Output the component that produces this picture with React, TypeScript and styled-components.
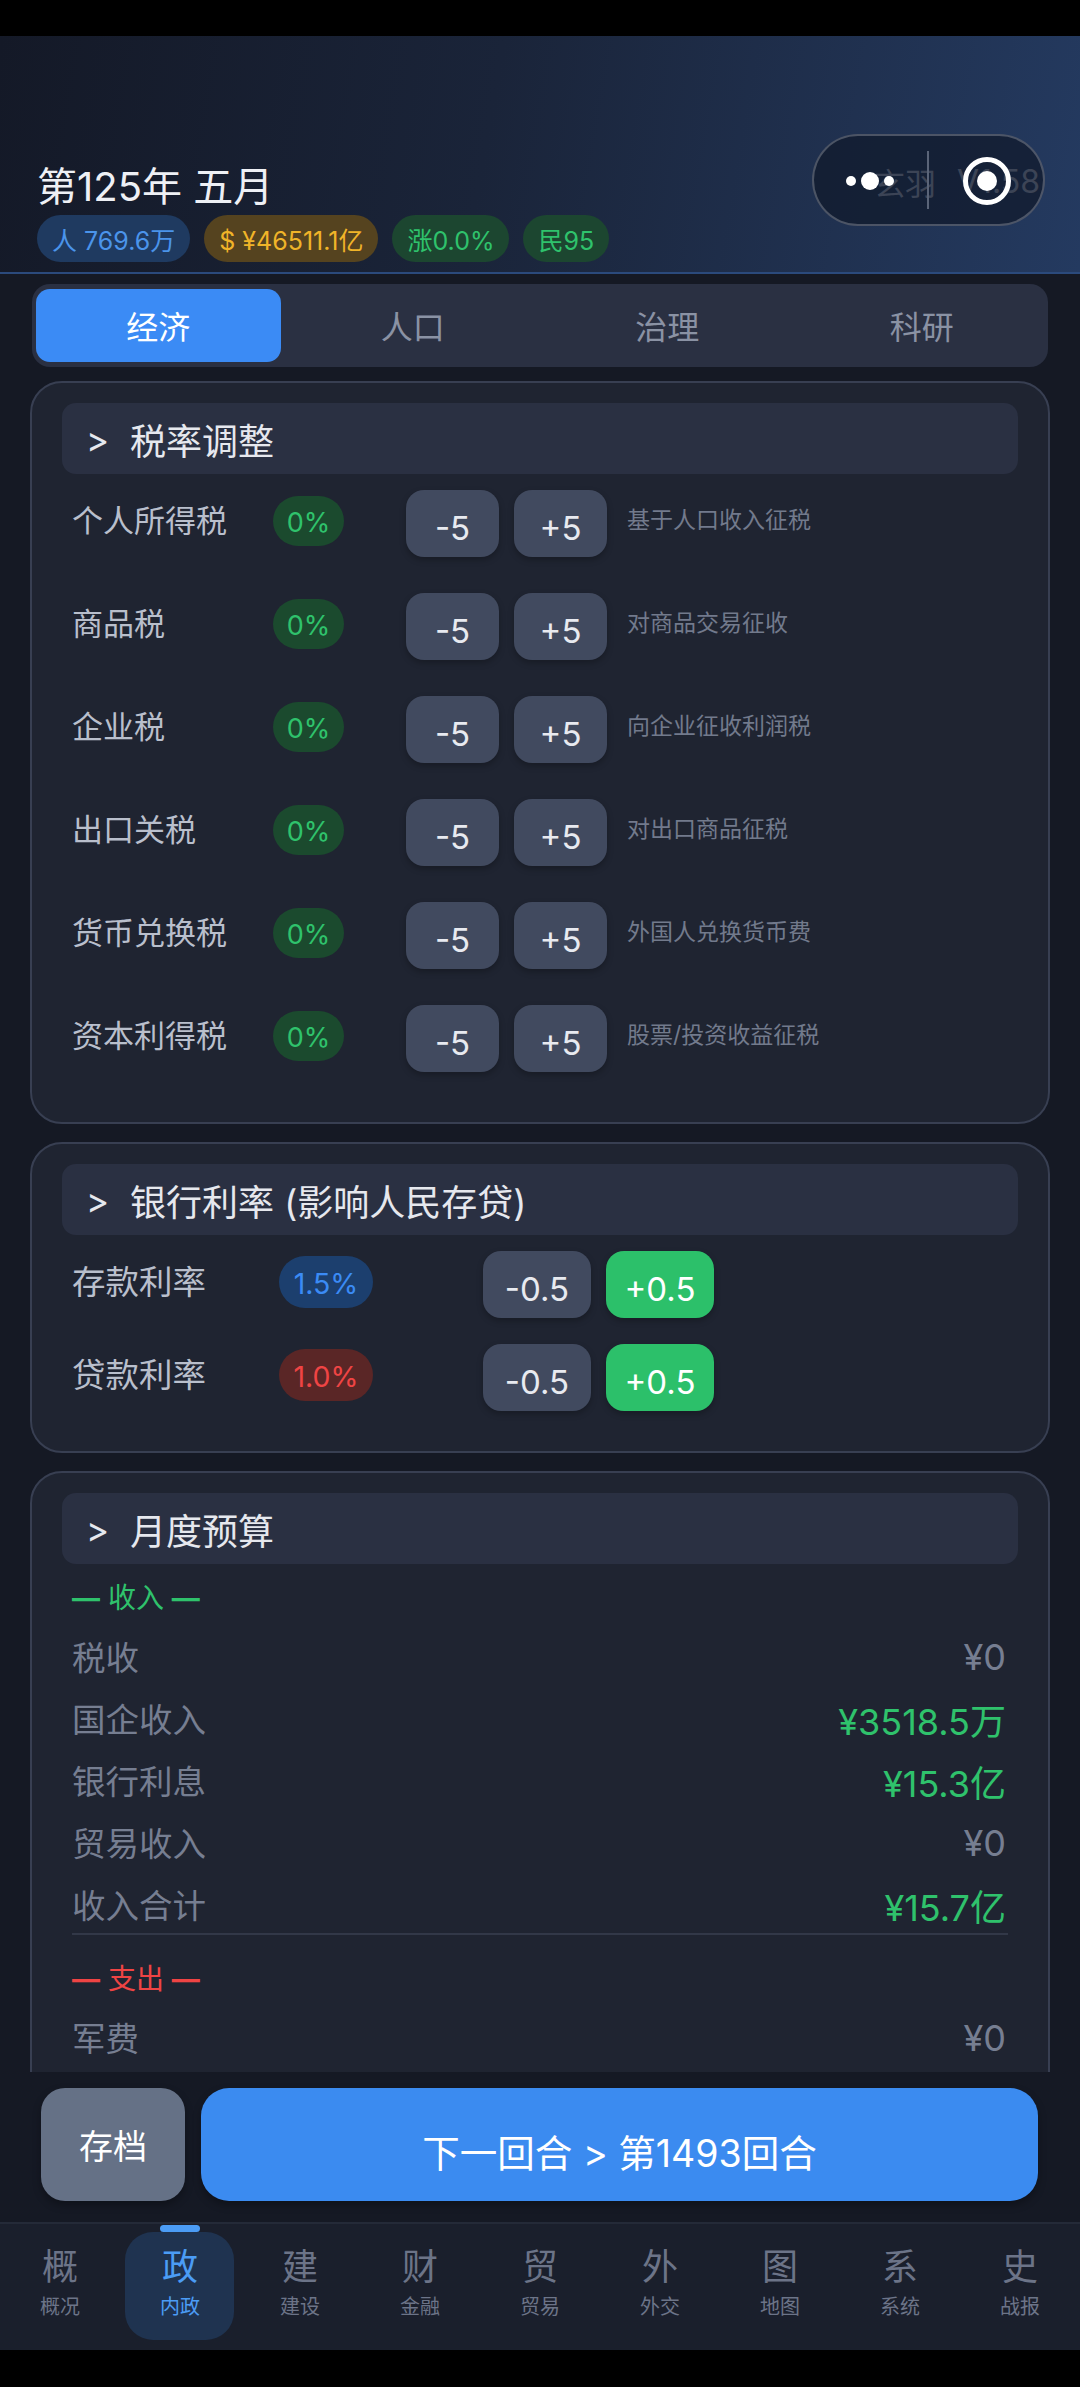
import React from "react";
import styled, { createGlobalStyle } from "styled-components";

const Global = createGlobalStyle`
  html, body { margin: 0; padding: 0; background: #000; }
  * { box-sizing: border-box; }
  body { font-family: Inter, "Noto Sans CJK SC", sans-serif; }
`;

const Screen = styled.div`
  width: 1080px; height: 2387px; display: flex; flex-direction: column;
  background: #151924; overflow: hidden; position: relative;
`;
const BlackBar = styled.div<{ $h: number }>`
  height: ${p => p.$h}px; flex: none; background: #000;
`;
const Header = styled.header`
  flex: none; height: 238px; padding: 127px 40px 0 37px; position: relative;
  background: linear-gradient(100deg, #141927 0%, #1a2439 45%, #243a60 100%);
  border-bottom: 2px solid #2b4a7c;
  display: flex; justify-content: space-between;
`;
const Title = styled.h1`
  margin: -1px 0 0; font-size: 40px; line-height: 50px; font-weight: 400; color: #eef0f5;
`;
const Pills = styled.div`
  display: flex; gap: 14px; margin-top: 3px;
`;
const StatPill = styled.span<{ $bg: string; $fg: string }>`
  height: 47px; padding: 0 15px; border-radius: 24px; display: flex; align-items: center;
  font-size: 25px; white-space: nowrap; background: ${p => p.$bg}; color: ${p => p.$fg};
`;
const HeaderMeta = styled.div`
  display: flex; align-items: center; height: 50px; margin-top: -7px;
  color: #a3acbe;
`;
const MetaName = styled.span` font-size: 31px; margin-right: 21px; `;
const MetaVersion = styled.span` font-size: 32px; `;
const Capsule = styled.div`
  position: absolute; left: 812px; top: 98px; width: 233px; height: 92px; border-radius: 46px;
  border: 2px solid rgba(255,255,255,.24); background: rgba(16,24,42,.7);
`;
const CapsuleIcon = styled.svg`
  position: absolute; left: 0; top: 0;
`;

const Content = styled.main`
  flex: 1; min-height: 0; overflow: hidden; padding: 10px 30px 0;
`;
const Tabs = styled.nav`
  height: 83px; margin: 0 2px 14px; padding: 5px 4px; border-radius: 18px; background: #2a3042;
  display: grid; grid-template-columns: repeat(4, 1fr); gap: 10px;
`;
const Tab = styled.div<{ $active?: boolean }>`
  border-radius: 14px; display: flex; align-items: center; justify-content: center; font-size: 32px;
  padding-bottom: 2px;
  background: ${p => (p.$active ? "#3b8bf5" : "transparent")};
  color: ${p => (p.$active ? "#ffffff" : "#8a92a4")};
`;
const Card = styled.section<{ $pb: number }>`
  background: #1f2431; border: 2px solid #383f52; border-radius: 32px;
  padding: 20px 30px ${p => p.$pb}px; margin-bottom: 18px;
`;
const SectionHead = styled.h2`
  margin: 0 0 16px; height: 71px; border-radius: 14px; background: #2a3042; padding: 0 0 0 24px;
  display: flex; align-items: center; font-size: 36px; font-weight: 400; color: #e6e8ee;
`;
const Chevron = styled.span` width: 44px; font-size: 35px; `;
const Rows = styled.div<{ $gap: number }>`
  display: flex; flex-direction: column; gap: ${p => p.$gap}px; padding-left: 10px;
`;
const Row = styled.div`
  display: flex; align-items: center; height: 67px;
`;
const Label = styled.span<{ $w: number; $fs: number }>`
  width: ${p => p.$w}px; font-size: ${p => p.$fs}px; color: #b9bfcc; flex: none; margin-top: -10px;
`;
const Rate = styled.span<{ $w: number; $h: number; $mr: number; $fs: number; $bg: string; $fg: string }>`
  width: ${p => p.$w}px; height: ${p => p.$h}px; margin-right: ${p => p.$mr}px; border-radius: 26px; flex: none;
  display: flex; align-items: center; justify-content: center; font-size: ${p => p.$fs}px; padding-top: 4px;
  background: ${p => p.$bg}; color: ${p => p.$fg}; margin-top: -6px;
`;
const Btn = styled.button<{ $w: number; $green?: boolean }>`
  width: ${p => p.$w}px; height: 67px; border: 0; border-radius: 18px; flex: none; padding: 9px 0 0;
  font-family: inherit; font-size: 33px;
  background: ${p => (p.$green ? "#2cc06a" : "#414a5f")};
  color: ${p => (p.$green ? "#ffffff" : "#e8eaf0")};
  box-shadow: 0 3px 6px rgba(0,0,0,.25);
`;
const BtnGap = styled.div` display: flex; gap: 15px; margin-right: 20px; `;
const Desc = styled.span` font-size: 23px; color: #727a8c; margin-top: -11px; `;

const Group = styled.div<{ $c: string }>`
  padding-left: 10px; font-size: 28px; line-height: 36px; margin-bottom: 10px; color: ${p => p.$c};
`;
const Dash = styled.span` font-weight: 700; `;
const Budget = styled.div`
  display: flex; align-items: center; justify-content: space-between; height: 62px; padding: 0 12px 0 10px;
`;
const BudgetName = styled.span` font-size: 33.5px; color: #767e91; margin-top: -4px; `;
const BudgetValue = styled.span<{ $green?: boolean }>`
  font-size: 36px; color: ${p => (p.$green ? "#2fc26c" : "#767e91")};
`;
const Rule = styled.div` height: 2px; background: #323848; margin: -3px 10px 26px; `;

const Actions = styled.div`
  flex: none; height: 150px; padding: 16px 42px 21px 41px; display: flex; gap: 16px; background: #151924;
`;
const SaveBtn = styled.button`
  width: 144px; border: 0; border-radius: 24px; background: #657186; color: #fff;
  font-family: inherit; font-size: 34px; box-shadow: 0 4px 8px rgba(0,0,0,.3);
`;
const NextBtn = styled.button`
  flex: 1; border: 0; border-radius: 28px; background: #3b8bf0; color: #fff; padding-top: 12px;
  font-family: inherit; font-size: 37.5px; box-shadow: 0 4px 8px rgba(0,0,0,.3);
`;
const BottomNav = styled.nav`
  flex: none; height: 128px; display: grid; grid-template-columns: repeat(9, 120px);
  background: #1a1f2c; border-top: 2px solid #242a38; position: relative;
`;
const NavItem = styled.div<{ $active?: boolean }>`
  display: flex; flex-direction: column; align-items: center; position: relative; padding-top: 18px;
  color: ${p => (p.$active ? "#4b9cf5" : "#6c7488")};
`;
const NavActiveBg = styled.div`
  position: absolute; left: 5px; width: 109px; top: 8px; height: 108px; border-radius: 28px; background: #1f3350;
`;
const NavMark = styled.div`
  position: absolute; left: 40px; top: 1px; width: 40px; height: 7px; border-radius: 4px; background: #4b9cf5;
`;
const NavGlyph = styled.span` font-size: 36px; line-height: 50px; position: relative; `;
const NavLabel = styled.span` font-size: 20px; line-height: 30px; position: relative; `;

const taxes = [
  ["个人所得税", "基于人口收入征税"],
  ["商品税", "对商品交易征收"],
  ["企业税", "向企业征收利润税"],
  ["出口关税", "对出口商品征税"],
  ["货币兑换税", "外国人兑换货币费"],
  ["资本利得税", "股票/投资收益征税"],
];
const income: [string, string, boolean][] = [
  ["税收", "¥0", false],
  ["国企收入", "¥3518.5万", true],
  ["银行利息", "¥15.3亿", true],
  ["贸易收入", "¥0", false],
  ["收入合计", "¥15.7亿", true],
];
const nav = [
  ["概", "概况"], ["政", "内政"], ["建", "建设"], ["财", "金融"], ["贸", "贸易"],
  ["外", "外交"], ["图", "地图"], ["系", "系统"], ["史", "战报"],
];

export default function App() {
  return (
    <Screen>
      <Global />
      <BlackBar $h={36} />
      <Header>
        <div>
          <Title>第125年 五月</Title>
          <Pills>
            <StatPill $bg="#1f3a60" $fg="#4b94ea">人 769.6万</StatPill>
            <StatPill $bg="#55431f" $fg="#f0b429">$ ¥46511.1亿</StatPill>
            <StatPill $bg="#1c4630" $fg="#2fc26c">涨0.0%</StatPill>
            <StatPill $bg="#1c4630" $fg="#2fc26c">民95</StatPill>
          </Pills>
        </div>
        <HeaderMeta>
          <MetaName>玄羽</MetaName>
          <MetaVersion>V1.58</MetaVersion>
        </HeaderMeta>
        <Capsule>
          <CapsuleIcon width="229" height="88" viewBox="0 0 229 88">
            <circle cx="37" cy="45" r="5" fill="#fff" />
            <circle cx="56" cy="45" r="9" fill="#fff" />
            <circle cx="75" cy="45" r="5" fill="#fff" />
            <rect x="113" y="15" width="2" height="58" fill="#5a6478" />
            <circle cx="173" cy="45" r="21.5" fill="none" stroke="#fff" strokeWidth="5" />
            <circle cx="173" cy="45" r="10" fill="#fff" />
          </CapsuleIcon>
        </Capsule>
      </Header>
      <Content>
        <Tabs>
          <Tab $active>经济</Tab>
          <Tab>人口</Tab>
          <Tab>治理</Tab>
          <Tab>科研</Tab>
        </Tabs>
        <Card $pb={50}>
          <SectionHead><Chevron>&gt;</Chevron>税率调整</SectionHead>
          <Rows $gap={36}>
            {taxes.map(([name, desc]) => (
              <Row key={name}>
                <Label $w={201} $fs={31}>{name}</Label>
                <Rate $w={71} $h={50} $mr={62} $fs={27} $bg="#1b4a2e" $fg="#2fc26c">0%</Rate>
                <BtnGap>
                  <Btn $w={93}>-5</Btn>
                  <Btn $w={93}>+5</Btn>
                </BtnGap>
                <Desc>{desc}</Desc>
              </Row>
            ))}
          </Rows>
        </Card>
        <Card $pb={40}>
          <SectionHead><Chevron>&gt;</Chevron>银行利率 (影响人民存贷)</SectionHead>
          <Rows $gap={26}>
            <Row>
              <Label $w={207} $fs={33.5}>存款利率</Label>
              <Rate $w={94} $h={52} $mr={110} $fs={28.5} $bg="#1c3f6e" $fg="#3b8bf5">1.5%</Rate>
              <BtnGap>
                <Btn $w={108}>-0.5</Btn>
                <Btn $w={108} $green>+0.5</Btn>
              </BtnGap>
            </Row>
            <Row>
              <Label $w={207} $fs={33.5}>贷款利率</Label>
              <Rate $w={94} $h={52} $mr={110} $fs={28.5} $bg="#5a2626" $fg="#ef4444">1.0%</Rate>
              <BtnGap>
                <Btn $w={108}>-0.5</Btn>
                <Btn $w={108} $green>+0.5</Btn>
              </BtnGap>
            </Row>
          </Rows>
        </Card>
        <Card $pb={60}>
          <SectionHead><Chevron>&gt;</Chevron>月度预算</SectionHead>
          <Group $c="#2fc26c"><Dash>—</Dash> 收入 <Dash>—</Dash></Group>
          {income.map(([n, v, g]) => (
            <Budget key={n}>
              <BudgetName>{n}</BudgetName>
              <BudgetValue $green={g}>{v}</BudgetValue>
            </Budget>
          ))}
          <Rule />
          <Group $c="#ef4444"><Dash>—</Dash> 支出 <Dash>—</Dash></Group>
          <Budget>
            <BudgetName>军费</BudgetName>
            <BudgetValue>¥0</BudgetValue>
          </Budget>
        </Card>
      </Content>
      <Actions>
        <SaveBtn>存档</SaveBtn>
        <NextBtn>下一回合 &gt; 第1493回合</NextBtn>
      </Actions>
      <BottomNav>
        {nav.map(([g, l], i) => (
          <NavItem key={l} $active={i === 1}>
            {i === 1 && <NavActiveBg />}
            {i === 1 && <NavMark />}
            <NavGlyph>{g}</NavGlyph>
            <NavLabel>{l}</NavLabel>
          </NavItem>
        ))}
      </BottomNav>
      <BlackBar $h={37} />
    </Screen>
  );
}
